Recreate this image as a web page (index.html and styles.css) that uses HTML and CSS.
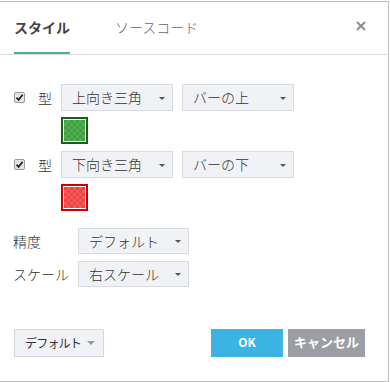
FILE: index.html
```html
<!DOCTYPE html>
<html lang="ja">
<head>
<meta charset="utf-8">
<link rel="stylesheet" href="styles.css">
</head>
<body>
<div class="dialog">
  <div class="header">
    <div class="tab active">スタイル</div>
    <div class="tab">ソースコード</div>
    <div class="close"><svg width="10" height="10" viewBox="0 0 10 10"><path d="M1 1 L9 9 M9 1 L1 9" stroke="#8c8c8c" stroke-width="2"/></svg></div>
  </div>
  <div class="content">
    <div class="row">
      <span class="check"><svg width="11" height="11" viewBox="0 0 11 11"><rect x="0.5" y="0.5" width="10" height="10" rx="1.5" fill="#e6e6e6" stroke="#9a9a9a"/><path d="M2.5 5.6 L4.6 7.8 L8.6 2.8" fill="none" stroke="#222" stroke-width="1.8"/></svg></span>
      <span class="lbl-type">型</span>
      <div class="select w112">上向き三角<span class="caret"></span></div>
      <div class="select w112">バーの上<span class="caret"></span></div>
    </div>
    <div class="swatch-row"><div class="swatch green"><div class="chk"></div></div></div>
    <div class="row">
      <span class="check"><svg width="11" height="11" viewBox="0 0 11 11"><rect x="0.5" y="0.5" width="10" height="10" rx="1.5" fill="#e6e6e6" stroke="#9a9a9a"/><path d="M2.5 5.6 L4.6 7.8 L8.6 2.8" fill="none" stroke="#222" stroke-width="1.8"/></svg></span>
      <span class="lbl-type">型</span>
      <div class="select w112">下向き三角<span class="caret"></span></div>
      <div class="select w112">バーの下<span class="caret"></span></div>
    </div>
    <div class="swatch-row"><div class="swatch red"><div class="chk"></div></div></div>
    <div class="row2 first">
      <span class="lbl">精度</span>
      <div class="select w111">デフォルト<span class="caret"></span></div>
    </div>
    <div class="row2">
      <span class="lbl">スケール</span>
      <div class="select w111">右スケール<span class="caret"></span></div>
    </div>
  </div>
  <div class="footer">
    <div class="btn-default">デフォルト<span class="caret2"></span></div>
    <div class="spacer"></div>
    <div class="btn ok">OK</div>
    <div class="btn cancel">キャンセル</div>
  </div>
</div>
</body>
</html>
```
FILE: styles.css
```css
* { box-sizing: border-box; }
html, body { margin: 0; padding: 0; background: #fff; }
body {
  font-family: "Noto Sans CJK JP", "Noto Sans", sans-serif;
  color: #333;
  width: 390px;
  height: 382px;
  overflow: hidden;
}
.dialog {
  margin-top: 1px;
  width: 389px;
  height: 381px;
  border-top: 1px solid #bdbdbd;
  border-right: 1px solid #bdbdbd;
  border-bottom: 1px solid #bdbdbd;
  display: flex;
  flex-direction: column;
}
.header {
  height: 53px;
  border-bottom: 1px solid #dcdcdc;
  display: flex;
  align-items: stretch;
  padding-left: 14px;
  margin-right: 1px;
}
.tab {
  font-size: 14px;
  color: #666;
  line-height: 50px;
  height: 52px;
  margin-right: 45px;
  white-space: nowrap;
  font-weight: 300;
}
.tab.active {
  font-weight: bold;
  color: #444;
  border-bottom: 2px solid #4db384;
  width: 56px;
}
.close {
  margin-left: auto;
  margin-right: 21px;
  display: flex;
  align-items: center;
  padding-bottom: 5px;
}
.content {
  padding-top: 29px;
  padding-left: 13px;
  flex: 1;
}
.row {
  display: flex;
  align-items: center;
  height: 27px;
}
.check {
  display: inline-flex;
  margin-left: 1px;
  width: 11px;
  height: 11px;
}
.lbl-type {
  font-size: 14px;
  margin-left: 13px;
  width: 23px;
  font-weight: 300;
}
.select {
  position: relative;
  height: 27px;
  background: #f0f2f5;
  border: 1px solid #d8dbe0;
  font-size: 14px;
  font-weight: 300;
  color: #333;
  padding-left: 10px;
  line-height: 25px;
  margin-right: 9px;
  white-space: nowrap;
}
.w112 { width: 112px; }
.w111 { width: 111px; height: 26px; line-height: 24px; }
.caret {
  position: absolute;
  right: 7px;
  top: 50%;
  margin-top: -1px;
  width: 0; height: 0;
  border-left: 3.5px solid transparent;
  border-right: 3.5px solid transparent;
  border-top: 3.5px solid #555;
}
.swatch-row {
  padding-left: 48px;
  padding-top: 6px;
  padding-bottom: 7px;
}
.swatch {
  width: 27px;
  height: 27px;
  border: 2px solid #1b5e1b;
  padding: 1px;
  background: #fff;
}
.swatch.red { border-color: #cc0000; }
.chk {
  width: 100%;
  height: 100%;
  background-size: 6px 6px;
}
.green .chk {
  background-color: #42a042;
  background-image: conic-gradient(#4fae4f 25%, transparent 0 50%, #4fae4f 0 75%, transparent 0);
}
.red .chk {
  background-color: #ee4444;
  background-image: conic-gradient(#f55a5a 25%, transparent 0 50%, #f55a5a 0 75%, transparent 0);
}
.row2 {
  display: flex;
  align-items: center;
  height: 26px;
  margin-top: 7px;
}
.row2.first { margin-top: 10px; }
.lbl {
  font-size: 14px;
  font-weight: 300;
  width: 65px;
  white-space: nowrap;
}
.footer {
  display: flex;
  align-items: center;
  padding: 0 23px 24px 14px;
}
.spacer { flex: 1; }
.btn-default {
  width: 90px;
  height: 28px;
  background: #f0f2f5;
  border: 1px solid #d5d8dc;
  font-size: 12px;
  letter-spacing: -0.8px;
  color: #333;
  line-height: 26px;
  padding-left: 10px;
  position: relative;
  white-space: nowrap;
}
.caret2 {
  position: absolute;
  right: 8px;
  top: 11px;
  width: 0; height: 0;
  border-left: 4.5px solid transparent;
  border-right: 4.5px solid transparent;
  border-top: 4.5px solid #9a9a9a;
}
.btn {
  height: 28px;
  color: #fff;
  font-weight: bold;
  font-size: 12px;
  line-height: 26px;
  text-align: center;
}
.ok { width: 72px; background: #3bb4e4; margin-right: 5px; }
.cancel { width: 77px; background: #9b9ea5; font-size: 13px; }
```
